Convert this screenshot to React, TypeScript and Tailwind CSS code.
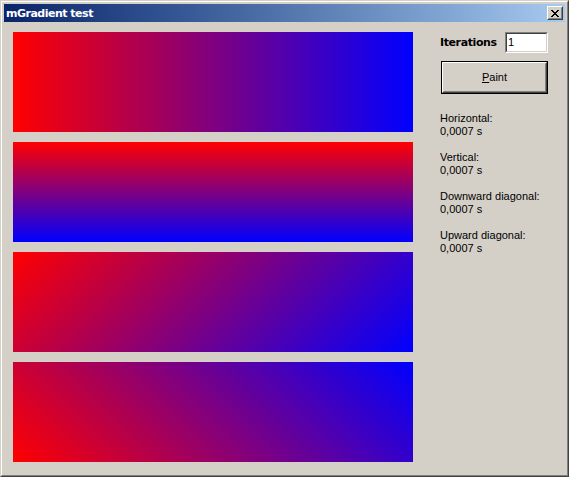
import React from "react";

const labelFont = { fontFamily: '"Liberation Sans", Arial, sans-serif' };

function Stat({ label }: { label: string }) {
  return (
    <div className="flex flex-col text-[11px] leading-[13px] text-black">
      <span>{label}</span>
      <span>0,0007 s</span>
    </div>
  );
}

export default function App() {
  return (
    <div
      className="w-[569px] h-[477px] bg-[#D4D0C8] border border-t-[#D4D0C8] border-l-[#D4D0C8] border-b-[#404040] border-r-[#404040] select-none"
      style={labelFont}
    >
      <div className="w-full h-full border border-t-white border-l-white border-b-[#808080] border-r-[#808080] p-[2px] flex flex-col">
        {/* Title bar */}
        <div className="h-[18px] flex items-center bg-gradient-to-r from-[#0A246A] to-[#A6CAF0] pl-[2px] pr-[2px]">
          <span className="text-white font-bold text-[11px] leading-[13px] font-['DejaVu_Sans',sans-serif] tracking-[-0.5px]">
            mGradient test
          </span>
          <div className="ml-auto w-[16px] h-[14px] border border-t-white border-l-white border-b-[#404040] border-r-[#404040]">
            <div className="w-full h-full bg-[#D4D0C8] border border-t-[#D4D0C8] border-l-[#D4D0C8] border-b-[#808080] border-r-[#808080] flex items-center justify-center">
              <svg width="8" height="7" viewBox="0 0 8 7" shapeRendering="crispEdges">
                <path d="M0 0h2v1h-2zM6 0h2v1h-2zM1 1h2v1h-2zM5 1h2v1h-2zM2 2h4v1h-4zM3 3h2v1h-2zM2 4h4v1h-4zM1 5h2v1h-2zM5 5h2v1h-2zM0 6h2v1h-2zM6 6h2v1h-2z" fill="#000" />
              </svg>
            </div>
          </div>
        </div>

        {/* Client area */}
        <div className="flex flex-row flex-1">
          <div className="flex flex-col gap-[10px] pt-[10px] pl-[9px]">
            <div className="w-[400px] h-[100px] bg-[linear-gradient(90deg,#ff0000,#0000ff)]" />
            <div className="w-[400px] h-[100px] bg-[linear-gradient(180deg,#ff0000,#0000ff)]" />
            <div className="w-[400px] h-[100px] bg-[linear-gradient(135deg,#ff0000,#0000ff)]" />
            <div className="w-[400px] h-[100px] bg-[linear-gradient(45deg,#ff0000,#0000ff)]" />
          </div>

          <div className="ml-[27px] pt-[10px] w-[108px] flex flex-col">
            <div className="flex items-center justify-between h-[21px]">
              <span className="font-bold text-[11px] leading-[13px] font-['DejaVu_Sans',sans-serif] tracking-[-0.4px] text-black">
                Iterations
              </span>
              <div className="w-[43px] h-[21px] border border-t-[#808080] border-l-[#808080] border-b-white border-r-white">
                <div className="w-full h-full bg-white border border-t-[#404040] border-l-[#404040] border-b-[#D4D0C8] border-r-[#D4D0C8] flex items-center pl-[1px] text-[11px] leading-[13px] text-black">
                  1
                </div>
              </div>
            </div>

            <div className="mt-[8px] ml-[1px] w-[107px] h-[33px] border border-black">
              <div className="w-full h-full border border-t-white border-l-white border-b-[#404040] border-r-[#404040]">
                <div className="w-full h-full border border-t-[#D4D0C8] border-l-[#D4D0C8] border-b-[#808080] border-r-[#808080] flex items-center justify-center text-[11px] leading-[13px] text-black">
                  <span>
                    <span className="underline underline-offset-[1px]">P</span>aint
                  </span>
                </div>
              </div>
            </div>

            <div className="mt-[18px] flex flex-col gap-[13px]">
              <Stat label="Horizontal:" />
              <Stat label="Vertical:" />
              <Stat label="Downward diagonal:" />
              <Stat label="Upward diagonal:" />
            </div>
          </div>
        </div>
      </div>
    </div>
  );
}
